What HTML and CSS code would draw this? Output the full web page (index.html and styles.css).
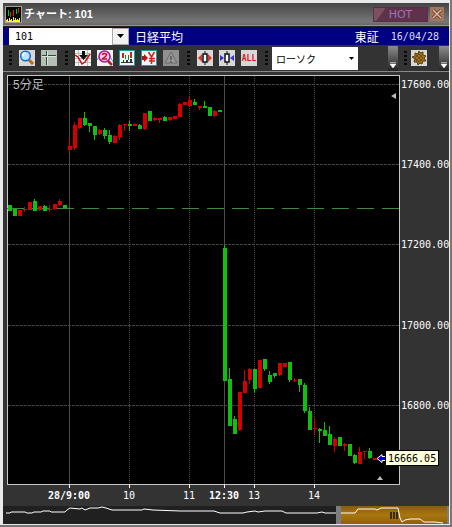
FILE: index.html
```html
<!DOCTYPE html>
<html lang="ja">
<head>
  <meta charset="UTF-8">
  <meta name="viewport" content="width=device-width, initial-scale=1.0">
  <title>チャート: 101</title>
  <link rel="stylesheet" href="styles.css">
</head>
<body>
  <div class="window">
    <header class="titlebar">
      <svg class="app-icon" viewBox="0 0 17 17">
        <rect x=".5" y=".5" width="16" height="16" fill="#070707" stroke="#a5a48a"/>
        <path d="M3.500 4v6M11.500 3v5" stroke="#0c3" stroke-width="1"/>
        <path d="M5.500 6v5M8.500 4v6M13.500 2v5" stroke="#d22" stroke-width="1"/>
        <path d="M1 16v-2h1v-1h1v2h1v-3h1v2h1v-1h1v2h1v-4h1v3h1v-2h1v2h1v-1h1v1h1v-2h1v4z" fill="#ff0"/>
      </svg>
      <h1>チャート: 101</h1>
      <button class="hot">HOT</button>
      <button class="close" aria-label="閉じる">
        <svg viewBox="0 0 14 14"><path d="M3 3l8 8M11 3l-8 8" stroke="#5f3524" stroke-width="3"/><path d="M3 3l8 8M11 3l-8 8" stroke="#dfc0a8" stroke-width="1.500"/></svg>
      </button>
    </header>

    <div class="symbol-bar">
      <div class="code">
        <input type="text" value="101" aria-label="銘柄コード">
        <button aria-label="銘柄一覧"><svg viewBox="0 0 7 4"><path d="M0 0h7l-3.500 4z"/></svg></button>
      </div>
      <span class="name">日経平均</span>
      <span class="market">東証</span>
      <time datetime="2016-04-28">16/04/28</time>
    </div>

    <div class="toolbar">
      <div class="tools">
        <i class="grip"></i>
        <button class="tool" aria-label="拡大">
          <svg viewBox="0 0 16 16"><path d="M10 10l4 4" stroke="#b56a20" stroke-width="3"/><circle cx="6.500" cy="6" r="4.800" fill="#b4e6ff" stroke="#1765c8" stroke-width="1.500"/><path d="M3.500 6a3 3 0 0 1 3-3" stroke="#fff" stroke-width="1.500" fill="none"/></svg>
        </button>
        <button class="tool sage" aria-label="十字線">
          <svg viewBox="0 0 16 16"><path d="M5.500 1v14M1 5.500h14" stroke="#35463a" fill="none"/><path d="M6.500 1v14M1 6.500h14" stroke="#d9e5da" fill="none"/></svg>
        </button>
      </div>
      <div class="tools">
        <i class="grip"></i>
        <button class="tool" aria-label="トレンドライン">
          <svg viewBox="0 0 16 16"><rect width="16" height="16" fill="#f4f4f4"/><path d="M0 3.500h16M0 8.500h16M0 12.500h16M3.500 0v16M12.500 0v16" stroke="#bbb"/><path d="M0 5l3 2 4 7 3-2 5-8" stroke="#c11" stroke-width="1.500" fill="none"/><path d="M7 1h3v4h3l-4.500 5L4 5h3z" fill="#111"/></svg>
        </button>
        <button class="tool" aria-label="期間拡大">
          <svg viewBox="0 0 16 16"><rect width="16" height="16" fill="#f4f4f4"/><path d="M0 10l4-7 4 8 4-7 4 8" stroke="#5ab" fill="none"/><path d="M11 11l4 4" stroke="#a22" stroke-width="2.500"/><circle cx="7.500" cy="6.500" r="5.500" fill="#fce" stroke="#a0208c" stroke-width="1.500"/><path d="M5.500 5c0-2 4-2 4 0 0 1.500-3 2.500-4 4h4.500" stroke="#c01030" stroke-width="1.500" fill="none"/></svg>
        </button>
        <button class="tool teal" aria-label="複数銘柄">
          <svg viewBox="0 0 14 14"><path d="M1 11.500h12" stroke="#333"/><path d="M2 2h2v5H2zM10 1h2v6h-2z" fill="#c22"/><path d="M5 4h1v4H5zM8 4h1v5H8z" fill="#0a8a2a"/><path d="M3 9h1v2H3zM6 9h2v2H6zM10 8h2v3h-2z" fill="#333"/></svg>
        </button>
        <button class="tool teal" aria-label="円換算">
          <svg viewBox="0 0 14 14"><path d="M0 5h2V3l4 4-4 4V9H0z" fill="#b11"/><path d="M6.500 1l3 5 3-5M9.500 6v7M7 7.500h6M7 10h6" stroke="#e01818" stroke-width="1.500" fill="none"/></svg>
        </button>
        <button class="tool disabled" aria-label="アラート">
          <svg viewBox="0 0 16 16"><path d="M8 2l6 11H2z" fill="#999" stroke="#6a6a6a"/><path d="M8 6v4M8 11v1.500" stroke="#555" stroke-width="1.500"/></svg>
        </button>
      </div>
      <div class="tools">
        <i class="grip"></i>
        <button class="tool" aria-label="幅を広げる">
          <svg viewBox="0 0 16 16"><path d="M8 1v14" stroke="#111"/><path d="M6 4h4v8H6z" fill="#fff" stroke="#111" stroke-width="1.500"/><path d="M5 4v8L1 8zM11 4v8l4-4z" fill="#d33"/></svg>
        </button>
        <button class="tool" aria-label="幅を狭める">
          <svg viewBox="0 0 16 16"><path d="M8 1v14" stroke="#111"/><path d="M6 4h4v8H6z" fill="#fff" stroke="#111" stroke-width="1.500"/><path d="M1 5v6l4-3zM15 5v6l-4-3z" fill="#33d"/></svg>
        </button>
        <button class="tool all">ALL</button>
      </div>
      <div class="tools tight">
        <i class="grip"></i>
        <div class="chart-type">
          <select aria-label="チャート種類">
            <option>ローソク</option>
            <option>バー</option>
            <option>ライン</option>
          </select>
          <svg viewBox="0 0 5 3"><path d="M0 0h5l-2.500 3z"/></svg>
        </div>
      </div>
      <button class="more push" aria-label="その他"><svg viewBox="0 0 6 6"><path d="M0 .5h6M0 2h6l-3 4z" stroke="#fff" stroke-width=".5" fill="#fff"/></svg></button>
      <div class="tools tight">
        <i class="grip"></i>
        <button class="tool" aria-label="設定">
          <svg viewBox="0 0 16 16"><path d="M8 1l1 2 3-1v3l3 1-2 2 2 3-3 0-1 3-2-1-2 2-1-3-3 0 1-3-3-2 3-1 0-3 3 1z" fill="#9b7222" stroke="#5b3a05"/><path d="M5 5l6 6M8 4l4 4M4 8l4 4M11 5l-6 6M8 4L4 8M12 8l-4 4" stroke="#5c3b08" stroke-width=".7"/></svg>
        </button>
      </div>
      <button class="more" aria-label="その他"><svg viewBox="0 0 6 6"><path d="M0 .5h6M0 2h6l-3 4z" stroke="#fff" stroke-width=".5" fill="#fff"/></svg></button>
    </div>

    <main class="chart">
      <svg id="chart" viewBox="3 72 446 434" role="img" aria-label="日経平均 5分足"></svg>
    </main>

    <footer class="navigator">
      <svg viewBox="3 0 446 18" preserveAspectRatio="none">
        <defs>
          <linearGradient id="gold" x2="0" y2="1">
            <stop offset="0" stop-color="#8a5c08"/>
            <stop offset=".5" stop-color="#a8760f"/>
            <stop offset="1" stop-color="#906008"/>
          </linearGradient>
        </defs>
        <rect x="341" width="108" height="18" fill="url(#gold)"/>
        <rect x="336" width="5" height="18" fill="#7d7d7d"/>
        <rect x="447" width="2" height="18" fill="#7d7d7d"/>
        <path d="M391 6v7M394 6v7M397 6v7" stroke="#3a2a08" stroke-width="2"/>
        <polyline class="overview" points="6,7 10,7 11,6 25,6 27,7 32,7 34,6 41,6 43,5 50,5 51,6 65,6 67,4 70,2 80,3 82,2 85,4 90,2 98,2 102,1 106,2 112,4 142,4 144,3 153,4 180,5 214,5 220,7 243,7 247,6 255,5 258,6 265,5 282,5 286,7 317,7 322,6 325,7 336,7"/>
        <polyline class="overview" points="341,7 355,7 358,3 375,3 377,4 381,2 398,2 400,12 402,16 405,14 410,13 420,13 424,16 435,16 443,17"/>
      </svg>
    </footer>
  </div>

  <script src="chart.js"></script>
</body>
</html>
```

FILE: styles.css
```css
* {
  box-sizing: border-box;
}
body {
  margin: 0;
  background: #777;
  color: #fff;
  font-family: "Liberation Sans", "Noto Sans CJK JP", sans-serif;
  font-size: 12px;
}
button {
  padding: 0;
  border: 0;
  font-family: inherit;
}
svg {
  display: block;
}
.window {
  margin: 0 2px 2px 0;
  border: 3px solid #e9e9e9;
  border-width: 3px 1px 1px 3px;
  background: #333;
}

/* title bar */
.titlebar {
  display: flex;
  align-items: center;
  height: 23px;
  padding: 0 5px 0 2px;
  background: linear-gradient(#444, #777 85%, #666);
  border-bottom: 1px solid #d08c20;
}
.app-icon {
  width: 17px;
  height: 17px;
}
h1 {
  flex: 1;
  margin: 0 0 0 2px;
  font-size: 11px;
  line-height: 20px;
}
.hot {
  width: 55px;
  height: 15px;
  margin-right: 2px;
  border: 1px solid #54304a;
  background: linear-gradient(125deg, #7d4d60 18%, #60324a 19%);
  color: #9a74b8;
  font-family: "DejaVu Sans", sans-serif;
  font-size: 11px;
  line-height: 13px;
}
.close {
  width: 14px;
  height: 14px;
  background: #a3765c;
}

/* symbol bar */
.symbol-bar {
  display: flex;
  align-items: center;
  height: 19px;
  padding: 0 10px 0 6px;
  border-top: 1px solid #222;
  background: #000080;
}
.code {
  display: flex;
  width: 120px;
  height: 17px;
}
.code input {
  flex: 1;
  min-width: 0;
  padding: 0 6px;
  border: 0;
  background: #fff;
  font-family: "DejaVu Sans Mono", monospace;
  font-size: 10px;
}
.code button {
  width: 17px;
  border: 1px solid #aaa;
  background: #f2f2f2;
}
.code svg {
  width: 7px;
  margin: auto;
}
.name {
  flex: 1;
  margin-left: 6px;
}
.market {
  margin-right: 12px;
}
.symbol-bar time {
  color: #dde;
  font-family: "DejaVu Sans Mono", monospace;
  font-size: 10px;
}

/* toolbar */
.toolbar {
  display: flex;
  align-items: center;
  height: 27px;
  border-bottom: 1px solid #888;
}
.tools {
  display: flex;
  align-items: center;
  gap: 6px;
  padding-left: 6px;
}
.grip {
  width: 3px;
  height: 15px;
  margin-right: 1px;
  background: repeating-linear-gradient(#080808 0 2px, transparent 2px 4px);
}
.tool {
  width: 16px;
  height: 16px;
  background: #d8d8d8;
}
.sage {
  background: #b3c0b3;
}
.teal {
  border: 1px solid #18a0a0;
  background: #eef8f6;
}
.disabled {
  background: #909090;
}
.all {
  color: #e01818;
  font-family: "DejaVu Sans Mono", monospace;
  font-size: 8px;
  font-weight: bold;
}
.tools + .tools {
  padding-left: 8px;
}
.tight {
  gap: 3px;
}
.chart-type {
  position: relative;
  width: 86px;
}
.chart-type select {
  width: 100%;
  height: 23px;
  padding: 0 4px;
  border: 0;
  border-radius: 0;
  appearance: none;
  background: #fff;
  font-family: "Noto Sans CJK JP", sans-serif;
  font-size: 10px;
}
.chart-type svg {
  position: absolute;
  top: 10px;
  right: 4px;
  width: 5px;
  pointer-events: none;
}
.more {
  width: 10px;
  height: 25px;
  padding: 13px 2px 0;
  background: linear-gradient(#8c8c8c, #222);
}
.more svg {
  width: 6px;
}
.push {
  margin-left: auto;
}
.more + .tools {
  margin-right: 12px;
}

/* chart */
.chart svg {
  width: 100%;
}
.grid {
  stroke: #444;
  stroke-dasharray: 3 1;
}
.hour {
  stroke: #484848;
  stroke-dasharray: 1 1;
}
.session {
  stroke: #4c4c4c;
}
.base {
  stroke: #3f8a3f;
  stroke-dasharray: 17 8;
}
.up {
  fill: #d40000;
}
.down {
  fill: #10c010;
}
.axis {
  fill: #fff;
  font-family: "DejaVu Sans Mono", monospace;
  font-size: 10px;
}
.time {
  text-anchor: middle;
}
.bold {
  font-weight: bold;
}
.legend {
  fill: #bbb;
  font-size: 12px;
}
.last {
  fill: #000;
}

/* navigator */
.navigator {
  background: #202020;
}
.navigator svg {
  width: 100%;
  height: 18px;
}
.overview {
  fill: none;
  stroke: #fff;
}
```

FILE: chart.js
```js
// x, body top, body bottom, high, low, direction
const candles = [
  [8, 205, 211, 205, 211, 'd'], [13, 209, 216, 209, 216, 'd'], [18, 210, 216, 210, 216, 'u'],
  [23, 209, 210, 207, 212, 'u'], [28, 202, 210, 202, 210, 'u'], [33, 201, 211, 199, 211, 'd'],
  [38, 206, 210, 206, 211, 'u'], [43, 206, 211, 205, 211, 'd'], [48, 209, 210, 205, 212, 'u'],
  [53, 204, 209, 204, 210, 'u'], [58, 201, 205, 199, 206, 'u'], [63, 205, 208, 205, 208, 'd'],
  [68, 146, 150, 138, 153, 'u'], [73, 125, 148, 122, 150, 'u'], [78, 118, 128, 118, 129, 'u'],
  [83, 118, 125, 112, 126, 'd'], [88, 123, 126, 123, 132, 'd'], [93, 126, 135, 126, 140, 'd'],
  [98, 130, 134, 129, 135, 'u'], [103, 130, 136, 128, 139, 'd'], [108, 135, 142, 130, 144, 'd'],
  [113, 136, 143, 135, 143, 'u'], [118, 125, 137, 124, 140, 'u'], [123, 124, 125, 124, 131, 'u'],
  [128, 124, 126, 121, 131, 'd'], [133, 124, 126, 123, 126, 'u'], [138, 125, 129, 124, 129, 'd'],
  [143, 113, 129, 113, 130, 'u'], [148, 111, 121, 111, 121, 'd'], [153, 118, 120, 117, 121, 'u'],
  [158, 118, 120, 118, 123, 'u'], [163, 117, 121, 116, 121, 'd'], [168, 117, 120, 117, 121, 'u'],
  [173, 116, 119, 116, 119, 'u'], [178, 104, 117, 103, 117, 'u'], [183, 102, 105, 102, 105, 'u'],
  [188, 100, 106, 96, 107, 'u'], [193, 102, 105, 99, 105, 'd'], [198, 106, 108, 106, 110, 'u'],
  [203, 106, 108, 101, 108, 'd'], [208, 107, 116, 107, 116, 'd'], [213, 111, 116, 110, 117, 'u'],
  [218, 110, 112, 110, 112, 'd'],
  [223, 248, 381, 245, 381, 'd'], [228, 379, 426, 368, 426, 'd'], [233, 419, 434, 416, 434, 'd'],
  [238, 392, 430, 392, 431, 'u'], [243, 381, 393, 370, 393, 'u'], [248, 369, 380, 368, 384, 'u'],
  [253, 369, 389, 369, 393, 'd'], [258, 360, 388, 360, 388, 'u'], [263, 359, 369, 359, 371, 'd'],
  [268, 375, 382, 371, 384, 'd'], [273, 373, 376, 373, 378, 'd'], [278, 363, 375, 363, 376, 'u'],
  [283, 363, 367, 363, 367, 'u'], [288, 362, 380, 362, 382, 'd'], [293, 380, 381, 378, 382, 'u'],
  [298, 379, 385, 379, 392, 'd'], [303, 385, 411, 383, 413, 'd'], [308, 411, 430, 407, 430, 'd'],
  [313, 428, 429, 418, 434, 'u'], [318, 429, 431, 428, 443, 'd'], [323, 430, 436, 422, 436, 'd'],
  [328, 434, 445, 426, 445, 'd'], [333, 439, 446, 437, 452, 'u'], [338, 437, 446, 437, 446, 'd'],
  [343, 444, 446, 443, 451, 'u'], [348, 444, 456, 444, 456, 'd'], [353, 455, 463, 454, 464, 'd'],
  [358, 452, 464, 447, 464, 'u'], [363, 451, 452, 451, 459, 'u'], [368, 451, 458, 448, 459, 'd'],
  [373, 458, 460, 458, 460, 'u']
];

const prices = [['17600.00', 84], ['17400.00', 164], ['17200.00', 244], ['17000.00', 325], ['16800.00', 405]];
const times = [['28/9:00', 69, true], ['10', 129], ['11', 189], ['12:30', 224, true], ['13', 254], ['14', 314]];

let out = '<rect x="7" y="75" width="393" height="410" fill="#c4c8c0"/>' +
  '<rect x="8" y="76" width="391" height="408" fill="#000"/>';

for (const [label, y] of prices) {
  out += `<path class="grid" d="M8 ${y + 0.5}H399"/>`;
  out += `<text class="axis" x="401" y="${y + 4}">${label}</text>`;
}
for (const [label, x, session] of times) {
  out += `<path class="${session ? 'session' : 'hour'}" d="M${x + 0.5} 76V484"/>`;
  out += `<path d="M${x + 0.5} 484v4" stroke="#fff"/>`;
  out += `<text class="axis time${session ? ' bold' : ''}" x="${x}" y="499">${label}</text>`;
}
out += '<path class="base" d="M7 208.5H399"/>';

for (const [x, top, bottom, high, low, dir] of candles) {
  const cls = dir === 'u' ? 'up' : 'down';
  out += `<rect class="${cls}" x="${x}" y="${top}" width="4" height="${bottom - top}"/>`;
  out += `<rect class="${cls}" x="${x + 1}" y="${high}" width="1" height="${low - high}"/>`;
}

out += '<text class="legend" x="13" y="89">5分足</text>' +
  '<path d="M396 93v6l-5-3zM377 480l3-4 3 4z" fill="#bbb"/>' +
  '<path d="M377 458.500l5-4v2h4v4h-4v2z" fill="#00d" stroke="#fff"/>' +
  '<rect x="385.500" y="450.500" width="53" height="15" fill="#ffffdc" stroke="#000"/>' +
  '<text class="axis last" x="388" y="462">16666.05</text>';

document.getElementById('chart').innerHTML = out;
```
